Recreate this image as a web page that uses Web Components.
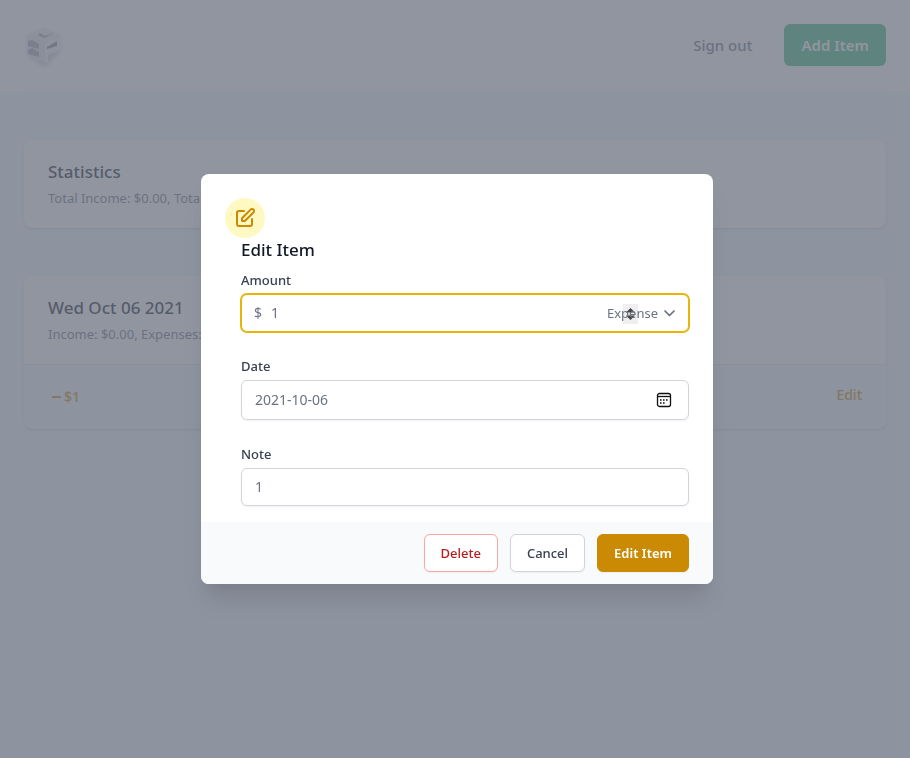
<!DOCTYPE html>
<html lang="en">
<head>
<meta charset="utf-8">
<title>Expense tracker</title>
<style>
  html, body { height: 100%; }
  body { margin: 0; font-family: "Noto Sans", "Open Sans", sans-serif; font-size: 14px; line-height: 20px; color: #6b7280; background: #f1f5f9; }
</style>
</head>
<body>
<tracker-page></tracker-page>
<script>
const define = (name, html) => customElements.define(name, class extends HTMLElement {
  connectedCallback() {
    if (this.shadowRoot) return;
    const root = this.attachShadow({ mode: 'open' });
    const tpl = document.createElement('template');
    tpl.innerHTML = '<style>*{box-sizing:border-box}h1,h2,p{margin:0}button,input,select{font:inherit}</style>' + html;
    root.append(tpl.content.cloneNode(true));
  }
});

define('brand-logo', `
<style>:host{display:block;width:40px;height:42px}svg{display:block;overflow:visible}</style>
<svg width="40" height="42" viewBox="0 0 40 42" role="img" aria-label="Home">
  <defs><filter id="s" x="-30%" y="-30%" width="160%" height="160%"><feGaussianBlur stdDeviation="2"/></filter>
  <filter id="f"><feGaussianBlur stdDeviation="0.6"/></filter></defs>
  <path d="M3 13 20 6 36 13 36 27 21 43 4 32Z" fill="#ccd0d5" filter="url(#s)"/>
  <g filter="url(#f)">
    <path d="M3 12 20 4 37 12 21 19Z" fill="#e9eaec"/>
    <path d="M3 12 21 19 21 39 3 30Z" fill="#e4e6e9"/>
    <path d="M21 19 37 12 37 25 24 31 24 38 21 39Z" fill="#f4f4f6"/>
    <path d="M4 17 8 16 15 20 15 25 4 22Z" fill="#a3a6ae"/>
    <path d="M4 26 8 24 15 28 15 33 4 30Z" fill="#a3a6ae"/>
    <path d="M23 23 33 17 33 22 23 25Z" fill="#868991"/>
    <path d="M14 11 20 14 29 10 26 8 28 10 20 12 16 9Z" fill="#a0a3aa"/>
  </g>
</svg>`);

define('page-header', `
<style>
:host{display:block;background:#fff;padding:0 24px 1px}
header{display:flex;align-items:center;gap:32px;padding:24px 0;border-bottom:1px solid #f3f4f6;font-size:15px;line-height:24px}
brand-logo{margin-right:auto}
a{color:#6b7280;font-weight:500;text-decoration:none}
button{border:1px solid transparent;border-radius:6px;padding:8px 16px;background:#3cb878;color:#fff;font-weight:600;line-height:24px}
</style>
<header><brand-logo></brand-logo><a href="#sign-out">Sign out</a><button type="button">Add Item</button></header>`);

define('summary-card', `
<style>
:host{display:block;background:#fff;border-radius:8px;overflow:hidden;box-shadow:0 1px 3px rgba(0,0,0,.1),0 1px 2px rgba(0,0,0,.06)}
.head{padding:20px 24px}
h2{font-size:17px;line-height:24px;font-weight:500;color:#111827}
p{margin-top:4px;font-size:13px;white-space:nowrap}
</style>
<div class="head"><h2><slot name="title"></slot></h2><p><slot name="detail"></slot></p></div><slot></slot>`);

define('entry-row', `
<style>
:host{display:flex;justify-content:space-between;align-items:center;padding:20px 24px;background:#f1f5f9;border-top:1px solid #e5e7eb;color:#ca8a04;font-weight:500}
.sum{display:flex;align-items:center;gap:2px;line-height:24px}
a{color:inherit;text-decoration:none;margin-bottom:4px}
</style>
<span class="sum"><svg width="14" height="14" viewBox="0 0 14 14" fill="none" stroke="currentColor" stroke-width="2" aria-hidden="true"><path d="M4 7h9"/></svg><slot></slot></span><a href="#edit">Edit</a>`);

define('action-button', `
<style>
:host{display:block}
button{display:block;border:1px solid #d1d5db;border-radius:6px;padding:8px 16px;background:#fff;color:#374151;font-size:13px;line-height:20px;font-weight:500;white-space:nowrap;box-shadow:0 1px 2px rgba(0,0,0,.05)}
:host([kind=danger]) button{border-color:#fca5a5;color:#b91c1c}
:host([kind=primary]) button{border-color:#ca8a04;background:#ca8a04;color:#fff;font-weight:600}
</style>
<button type="button"><slot></slot></button>`);

const fieldStyle = `<style>
:host{display:block}
label{display:block;color:#374151;font-weight:500;margin-bottom:4px}
.box{display:flex;align-items:center;border:1px solid #d1d5db;border-radius:6px;background:#fff;padding:0 13px;box-shadow:0 1px 2px rgba(0,0,0,.05)}
input{flex:1;min-width:0;border:0;outline:0;background:none;padding:0 0 2px;height:36px;color:#6b7280;appearance:none}
</style>`;

define('amount-field', fieldStyle + `
<style>
label{font-size:13px}
.box{border-color:#eab308;box-shadow:0 0 0 1px #eab308;padding:0 9px 0 12px}
.box>span{width:17px}
.unit{position:relative;display:flex;align-items:center;font-size:13px}
.spin{position:absolute;left:16px;top:1px}
select{position:relative;appearance:none;border:0;outline:0;background:none;color:#6b7280;padding:0;height:20px}
</style>
<label for="amount">Amount</label>
<div class="box"><span>$</span><input id="amount" inputmode="decimal" value="1">
<div class="unit">
<svg class="spin" width="15" height="20" viewBox="0 0 15 20" aria-hidden="true"><path d="M0 0h15v20H0z" fill="#efefef"/><path d="M3 8.500 7.500 4 12 8.500ZM3 11.500 7.500 16 12 11.500Z" fill="#444"/></svg>
<select aria-label="Type"><option>Expense</option><option>Income</option></select>
<svg width="20" height="20" viewBox="0 0 20 20" fill="none" stroke="#6b7280" stroke-width="1.700" stroke-linecap="round" stroke-linejoin="round" aria-hidden="true"><path d="m6 8 4.500 4.500L15 8"/></svg>
</div></div>`);

define('date-field', fieldStyle + `
<style>label{font-size:13px}input{height:38px}button{display:block;border:0;padding:0 3px;background:none}svg{display:block}</style>
<label for="date">Date</label>
<div class="box"><input id="date" value="2021-10-06">
<button type="button" aria-label="Open calendar"><svg width="16" height="16" viewBox="0 0 16 16" fill="none" aria-hidden="true"><rect x="1.500" y="1.500" width="13" height="13" rx="2" stroke="#111" stroke-width="1.300"/><path d="M1.500 4.500h13" stroke="#111" stroke-width="1.300"/><path d="M7 8h1.600M10 8h1.600M4 11h1.600M7 11h1.600M4 8h1.600" stroke="#111" stroke-width="1.600"/></svg></button></div>`);

define('note-field', fieldStyle + `
<style>label{font-size:13px}</style>
<label for="note">Note</label><div class="box"><input id="note" value="1"></div>`);

define('edit-dialog', `
<style>
:host{display:block;width:100%;max-width:512px;background:#fff;border-radius:8px;overflow:hidden;box-shadow:0 20px 25px -5px rgba(0,0,0,.1),0 10px 10px -5px rgba(0,0,0,.04)}
.body{padding:24px 24px 16px}
.badge{width:40px;height:40px;border-radius:50%;background:#fef9c3;display:grid;place-items:center}
.content{padding-left:16px}
h1{font-size:17px;line-height:24px;font-weight:500;color:#111827;margin-bottom:8px}
form{display:grid;gap:24px}
footer{display:flex;justify-content:flex-end;gap:12px;padding:12px 24px;background:#f8fafc}
</style>
<section role="dialog" aria-labelledby="t">
<div class="body">
<div class="badge"><svg width="24" height="24" viewBox="0 0 24 24" fill="none" stroke="#ca8a04" stroke-width="2" stroke-linecap="round" stroke-linejoin="round" aria-hidden="true"><path d="M11 5H6a2 2 0 00-2 2v11a2 2 0 002 2h11a2 2 0 002-2v-5m-1.414-9.414a2 2 0 112.828 2.828L11.828 15H9v-2.828l8.586-8.586z"/></svg></div>
<div class="content"><h1 id="t">Edit Item</h1>
<form><amount-field></amount-field><date-field></date-field><note-field></note-field></form></div>
</div>
<footer><action-button kind="danger">Delete</action-button><action-button>Cancel</action-button><action-button kind="primary">Edit Item</action-button></footer>
</section>`);

define('tracker-page', `
<style>
:host{display:block;min-height:100%}
main{display:grid;gap:48px;padding:48px 24px}
.overlay{position:fixed;inset:0;display:grid;place-items:center;padding:16px 16px 16px 20px;background:rgba(107,114,128,.75)}
</style>
<page-header></page-header>
<main>
<summary-card><span slot="title">Statistics</span><span slot="detail">Total Income: $0.00, Total</span></summary-card>
<summary-card><span slot="title">Wed Oct 06 2021</span><span slot="detail">Income: $0.00, Expenses:</span><entry-row>$1</entry-row></summary-card>
</main>
<div class="overlay"><edit-dialog></edit-dialog></div>`);
</script>
</body>
</html>
